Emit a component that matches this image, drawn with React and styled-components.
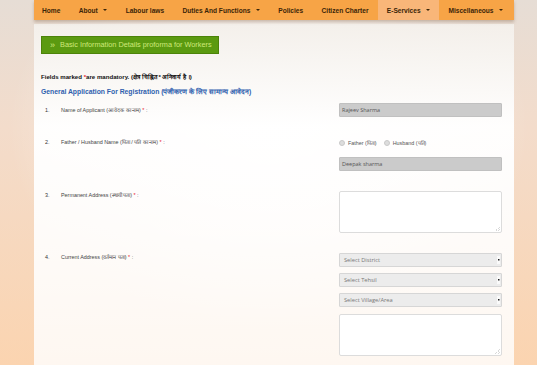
import React from "react";
import styled, { createGlobalStyle } from "styled-components";

const GlobalStyle = createGlobalStyle`
  html, body {
    margin: 0;
    padding: 0;
  }
  body {
    width: 537px;
    height: 365px;
    overflow: hidden;
    font-family: "Liberation Sans", Arial, sans-serif;
    background:
      radial-gradient(ellipse 260px 200px at 50% 35%, rgba(255, 255, 255, 0.9), rgba(255, 255, 255, 0) 100%),
      linear-gradient(to bottom, #e6ddd5 0%, #f3dccb 35%, #fbd4b0 100%);
  }
`;

const Page = styled.div`
  width: 480px;
  margin-left: 34px;
`;

// top menu

const NavBar = styled.ul`
  display: flex;
  margin: 0;
  padding: 0;
  list-style: none;
  height: 20px;
  background: #f7a446;
  box-shadow: 0 2px 3px rgba(120, 90, 60, 0.35);
  position: relative;
  z-index: 2;
`;

const NavItem = styled.li`
  display: flex;
  align-items: center;
  padding: 0 9.2px;
  font-size: 6.6px;
  font-weight: bold;
  color: #3b2508;
  white-space: nowrap;
  background: ${(p) => (p.$active ? "#f9b679" : "transparent")};
  &:first-child {
    padding-left: 8px;
  }
`;

const Caret = styled.span`
  display: inline-block;
  margin-left: 5.5px;
  width: 0;
  height: 0;
  border-left: 2px solid transparent;
  border-right: 2px solid transparent;
  border-top: 2.5px solid #3b2508;
`;

const Panel = styled.div`
  margin-top: 4px;
  height: 341px;
  padding: 12px 12px 0 7px;
  box-sizing: border-box;
  background: linear-gradient(
    to bottom,
    rgba(244, 240, 235, 0.96) 0%,
    rgba(255, 255, 255, 0.97) 30%,
    rgba(255, 255, 255, 0.82) 100%
  );
`;

const ProformaButton = styled.div`
  display: flex;
  align-items: center;
  gap: 5px;
  height: 18px;
  width: 178px;
  box-sizing: border-box;
  padding-left: 8px;
  background: #5b9a10;
  border: 1px solid #4c8309;
  color: #cfe97a;
  font-size: 7.3px;
  line-height: 8px;
`;

const Chevrons = styled.span`
  font-size: 9px;
  line-height: 8px;
`;

const Mandatory = styled.p`
  margin: 19px 0 0;
  font-size: 6.1px;
  line-height: 7px;
  font-weight: bold;
  color: #111;
`;

const Star = styled.span`
  color: #e8202a;
`;

const Heading = styled.h2`
  margin: 7px 0 0;
  font-size: 6.8px;
  line-height: 9px;
  font-weight: bold;
  color: #2f5fae;
`;

const Form = styled.div`
  display: flex;
  flex-direction: column;
  gap: 20.5px;
  margin-top: 7px;
`;

const Row = styled.div`
  display: grid;
  grid-template-columns: 16px 1fr 163px;
  padding-left: 4px;
  align-items: start;
`;

const Num = styled.span`
  font-size: 5.4px;
  color: #333;
  line-height: 8px;
  margin-top: ${(p) => p.$top || 0}px;
`;

const Label = styled.span`
  font-size: 5.4px;
  color: #444;
  line-height: 8px;
  margin-top: ${(p) => p.$top || 0}px;
`;

const Field = styled.div`
  display: flex;
  flex-direction: column;
  gap: ${(p) => p.$gap || 6}px;
`;

const TextInput = styled.div`
  height: 14px;
  box-sizing: border-box;
  padding-left: 2px;
  display: flex;
  align-items: center;
  background: #cbcbcb;
  border: 1px solid #c0c0c0;
  border-radius: 1px;
  font-family: "Open Sans", "Liberation Sans", sans-serif;
  font-size: 5.5px;
  color: #555;
`;

const TextArea = styled.div`
  height: 41.5px;
  box-sizing: border-box;
  margin-top: ${(p) => p.$top || 0}px;
  background:
    linear-gradient(135deg, transparent 50%, #d8d8d8 50%, #d8d8d8 60%, transparent 60%,
      transparent 75%, #d8d8d8 75%, #d8d8d8 85%, transparent 85%) right 1px bottom 1px / 5px 5px no-repeat,
    #fff;
  border: 1px solid #dcdcdc;
  border-radius: 2px;
`;

const Select = styled.div`
  height: 14px;
  box-sizing: border-box;
  padding: 0 1px 0 4px;
  display: flex;
  align-items: center;
  justify-content: space-between;
  background: #ececec;
  border: 1px solid #d6d6d6;
  border-radius: 1px;
  font-family: "Open Sans", "Liberation Sans", sans-serif;
  font-size: 5.7px;
  color: #777;
  &::after {
    content: "";
    width: 3px;
    height: 8px;
    background:
      linear-gradient(#222, #222) center / 1.5px 1.5px no-repeat,
      #fafafa;
  }
`;

const RadioGroup = styled.div`
  display: flex;
  align-items: center;
  gap: 7px;
  height: 8px;
  margin-top: 1.5px;
`;

const Radio = styled.label`
  display: flex;
  align-items: center;
  gap: 3px;
  font-size: 5.4px;
  color: #555;
  &::before {
    content: "";
    width: 4px;
    height: 4px;
    border-radius: 50%;
    background: #ddd;
    border: 1px solid #c9c9c9;
  }
`;

const menu = [
  { label: "Home" },
  { label: "About", drop: true },
  { label: "Labour laws" },
  { label: "Duties And Functions", drop: true },
  { label: "Policies" },
  { label: "Citizen Charter" },
  { label: "E-Services", drop: true, active: true },
  { label: "Miscellaneous", drop: true },
];

export default function App() {
  return (
    <>
      <GlobalStyle />
      <Page>
        <NavBar>
          {menu.map((m) => (
            <NavItem key={m.label} $active={m.active}>
              {m.label}
              {m.drop && <Caret />}
            </NavItem>
          ))}
        </NavBar>
        <Panel>
          <ProformaButton>
            <Chevrons>»</Chevrons>
            <span>Basic Information Details proforma for Workers</span>
          </ProformaButton>
          <Mandatory>
            Fields marked <Star>*</Star>are mandatory. (क्षेत्र चिह्नित * अनिवार्य है ।)
          </Mandatory>
          <Heading>
            General Application For Registration (पंजीकरण के लिए सामान्य आवेदन)
          </Heading>
          <Form>
            <Row>
              <Num $top={3}>1.</Num>
              <Label $top={3}>
                Name of Applicant (आवेदक का नाम) <Star>*</Star> :
              </Label>
              <Field>
                <TextInput>Rajeev Sharma</TextInput>
              </Field>
            </Row>
            <Row>
              <Num>2.</Num>
              <Label>
                Father / Husband Name (पिता / पति का नाम) <Star>*</Star> :
              </Label>
              <Field $gap={9.5}>
                <RadioGroup>
                  <Radio>Father (पिता)</Radio>
                  <Radio>Husband (पति)</Radio>
                </RadioGroup>
                <TextInput>Deepak sharma</TextInput>
              </Field>
            </Row>
            <Row>
              <Num>3.</Num>
              <Label>
                Permanent Address (स्थायी पता) <Star>*</Star> :
              </Label>
              <Field>
                <TextArea />
              </Field>
            </Row>
            <Row>
              <Num>4.</Num>
              <Label>
                Current Address (वर्तमान पता) <Star>*</Star> :
              </Label>
              <Field>
                <Select>Select District</Select>
                <Select>Select Tehsil</Select>
                <Select>Select Village/Area</Select>
                <TextArea $top={1} />
              </Field>
            </Row>
          </Form>
        </Panel>
      </Page>
    </>
  );
}
